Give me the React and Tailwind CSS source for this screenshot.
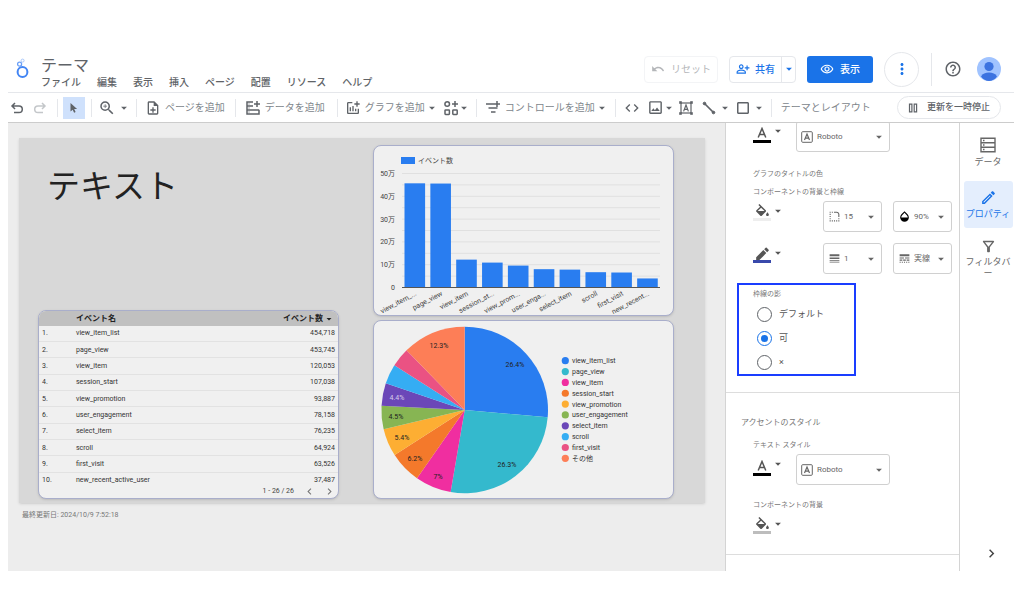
import { useState } from 'react'
import {
  MdUndo, MdArrowDropDown, MdZoomIn, MdOutlineNoteAdd, MdAddchart, MdCode, MdOutlineImage,
  MdCropSquare, MdFormatColorFill, MdBorderColor, MdOpacity, MdLineWeight, MdLineStyle,
  MdRoundedCorner, MdOutlineRemoveRedEye, MdOutlinePersonAddAlt, MdMoreVert, MdHelpOutline,
  MdOutlineFilterAlt, MdChevronRight, MdChevronLeft, MdOutlineEdit,
} from 'react-icons/md'

const MENU = ['ファイル', '編集', '表示', '挿入', 'ページ', '配置', 'リソース', 'ヘルプ']

const EVENTS = [
  { name: 'view_item_list', short: 'view_item_...', count: 454718 },
  { name: 'page_view', short: 'page_view', count: 453745 },
  { name: 'view_item', short: 'view_item', count: 120053 },
  { name: 'session_start', short: 'session_st...', count: 107038 },
  { name: 'view_promotion', short: 'view_prom...', count: 93887 },
  { name: 'user_engagement', short: 'user_enga...', count: 78158 },
  { name: 'select_item', short: 'select_item', count: 76235 },
  { name: 'scroll', short: 'scroll', count: 64924 },
  { name: 'first_visit', short: 'first_visit', count: 63526 },
  { name: 'new_recent_active_user', short: 'new_recent...', count: 37487 },
]

const SLICES = [
  { name: 'view_item_list', pct: 26.4, color: '#297df0', label: [142, 44] },
  { name: 'page_view', pct: 26.3, color: '#34b9cd', label: [134, 144] },
  { name: 'view_item', pct: 7, color: '#f02ea0', label: [65, 156] },
  { name: 'session_start', pct: 6.2, color: '#f4792b', label: [42, 138] },
  { name: 'view_promotion', pct: 5.4, color: '#fdae33', label: [29, 117] },
  { name: 'user_engagement', pct: 4.5, color: '#87b553', label: [23, 96] },
  { name: 'select_item', pct: 4.4, color: '#6b47b8', label: [24, 77], light: true },
  { name: 'scroll', pct: 3.8, color: '#35adf3' },
  { name: 'first_visit', pct: 3.7, color: '#ea5283' },
  { name: 'その他', pct: 12.3, color: '#fd7e57', label: [66, 25] },
]

function Caret({ className = '' }) {
  return <MdArrowDropDown className={`size-[14px] shrink-0 ${className}`} />
}

function Sep({ className = '' }) {
  return <span className={`h-[18px] w-px shrink-0 bg-gray-200 ${className}`} />
}

function Logo() {
  return (
    <svg viewBox="0 0 14 22" className="h-[22px] w-[14px]" fill="none" stroke="#4285f4">
      <circle cx="7.5" cy="15" r="4.9" strokeWidth="2" />
      <circle cx="4.6" cy="7.2" r="2" strokeWidth="1.3" stroke="#6a9ff6" />
      <circle cx="7.6" cy="3.6" r="1.5" strokeWidth="1" stroke="#a9c8fb" />
    </svg>
  )
}

function UndoIcon({ flip }) {
  return (
    <svg viewBox="0 0 14 14" className={`size-[14px] ${flip ? '-scale-x-100' : ''}`} fill="none" stroke="currentColor" strokeWidth="1.5">
      <path d="M5 2 2 5l3 3M2 5h7a3.2 3.2 0 0 1 0 6.6H4" />
    </svg>
  )
}

function PointerIcon() {
  return (
    <svg viewBox="0 0 10 12" className="h-[12px] w-[10px]" fill="currentColor">
      <path d="M1.5 1v8.6l2.2-1.9 1.4 3.1 1.5-.7-1.4-3 2.9-.2z" />
    </svg>
  )
}

function DataAddIcon() {
  return (
    <svg viewBox="0 0 16 16" className="size-[16px]" fill="none" stroke="currentColor" strokeWidth="1.5">
      <path d="M8 2H2v12h12V9.800M2 6h6M2 10h12M12 1v6M9 4h6" />
      <path d="M3.5 4h1M3.5 8h1M3.5 12h1" strokeWidth="1" />
    </svg>
  )
}

function WidgetAddIcon() {
  return (
    <svg viewBox="0 0 16 16" className="size-[16px]" fill="none" stroke="currentColor" strokeWidth="1.5">
      <circle cx="4.2" cy="4" r="2.3" />
      <path d="M12 1v6M9 4h6" />
      <rect x="2" y="10" width="4.4" height="4.4" rx=".6" />
      <rect x="9.8" y="10" width="4.4" height="4.4" rx=".6" />
    </svg>
  )
}

function ControlAddIcon() {
  return (
    <svg viewBox="0 0 16 16" className="size-[16px]" fill="none" stroke="currentColor" strokeWidth="1.5">
      <path d="M1 4h9M3.5 8h9M6 12h4.5M12 1v6M9 4h6" />
    </svg>
  )
}

function TextBoxIcon() {
  return (
    <svg viewBox="0 0 14 14" className="size-[14px]" fill="none" stroke="currentColor">
      <rect x="2" y="2" width="10" height="10" strokeWidth="1.2" />
      <path d="M4.6 10.4 7 4l2.4 6.4M5.4 8.4h3.2" strokeWidth="1.2" />
      <path d="M.5.5h2v2h-2zM11.5.5h2v2h-2zM.5 11.5h2v2h-2zM11.5 11.5h2v2h-2z" fill="currentColor" strokeWidth=".6" />
    </svg>
  )
}

function LineIcon() {
  return (
    <svg viewBox="0 0 14 14" className="size-[14px]" fill="currentColor" stroke="currentColor">
      <path d="M2.5 2.5 11.5 11.5" strokeWidth="1.7" />
      <circle cx="2.5" cy="2.5" r="1.3" />
      <circle cx="11.5" cy="11.5" r="1.3" />
    </svg>
  )
}

function PauseIcon() {
  return (
    <svg viewBox="0 0 10 10" className="size-[10px]" fill="none" stroke="currentColor" strokeWidth="1.2">
      <path d="M1.5 1.2h2.4v7.6H1.5zM6.2 1.2h2.4v7.6H6.2z" />
    </svg>
  )
}

function DataIcon() {
  return (
    <svg viewBox="0 0 16 16" className="size-[16px]" fill="none" stroke="currentColor" strokeWidth="1.4">
      <path d="M1 1.2h14v13.6H1zM1 5.7h14M1 10.3h14" />
      <path d="M3 3.5h1.5M3 8h1.5M3 12.5h1.5" />
    </svg>
  )
}

function FontIcon() {
  return (
    <svg viewBox="0 0 12 12" className="size-[12px]" fill="none" stroke="currentColor">
      <rect x=".7" y=".7" width="10.6" height="10.6" rx="1" />
      <path d="M3.5 9 6 3l2.5 6M4.3 7.2h3.4" strokeWidth="1.2" />
    </svg>
  )
}

function LetterIcon() {
  return (
    <svg viewBox="0 0 12 12" className="size-[12px]" fill="none" stroke="currentColor" strokeWidth="1.5">
      <path d="M2.2 10.5 6 1.5l3.8 9M3.5 7.6h5" />
    </svg>
  )
}

function Avatar() {
  return (
    <svg viewBox="0 0 24 24" className="size-[24px]">
      <circle cx="12" cy="12" r="12" fill="#a0c3ff" />
      <circle cx="12" cy="9.5" r="4.6" fill="#3c73e0" />
      <path d="M4 19.5c1.5-3 4.5-4 8-4s6.5 1 8 4c-2 2.8-5 4.5-8 4.5s-6-1.7-8-4.5z" fill="#3c73e0" />
    </svg>
  )
}

function Header() {
  return (
    <header className="flex h-[44px] items-center">
      <div className="ml-[7px] self-start pt-[9px]"><Logo /></div>
      <div className="ml-[12px] self-start pt-[9px]">
        <h1 className="text-[16px] leading-[18px] text-[#5f6368]">テーマ</h1>
        <nav className="flex gap-[16px]">
          {MENU.map(item => (
            <button key={item} className="text-[10px] leading-[16px] font-medium text-[#606367]">{item}</button>
          ))}
        </nav>
      </div>
      <div className="ml-auto flex items-center pb-[2px]">
        <button className="flex h-[27px] w-[74px] items-center justify-center gap-[6px] rounded border border-gray-100 text-[10px] text-[#b4b6b9]">
          <MdUndo className="size-[14px]" />
          リセット
        </button>
        <div className="ml-[11px] flex h-[27px] rounded border border-gray-200 text-[#1a73e8]">
          <button className="flex w-[51px] items-center justify-center gap-[5px] text-[10px] font-medium">
            <MdOutlinePersonAddAlt className="size-[14px]" />
            共有
          </button>
          <button aria-label="共有オプション" className="flex w-[14px] items-center justify-center border-l border-gray-200"><Caret /></button>
        </div>
        <button className="ml-[11px] flex h-[27px] w-[66px] items-center justify-center gap-[6px] rounded-[3px] bg-[#1a73e8] text-[10px] font-medium text-white">
          <MdOutlineRemoveRedEye className="size-[14px]" />
          表示
        </button>
        <button aria-label="その他" className="ml-[11px] flex size-[35px] items-center justify-center rounded-full border border-gray-200 text-[#1a73e8]">
          <MdMoreVert className="size-[18px]" />
        </button>
        <span className="ml-[12px] h-[33px] w-px bg-gray-200" />
        <button aria-label="ヘルプ" className="ml-[12px] text-[#5f6368]"><MdHelpOutline className="size-[18px]" /></button>
        <button aria-label="アカウント" className="mr-[13px] ml-[15px]"><Avatar /></button>
      </div>
    </header>
  )
}

function Toolbar() {
  return (
    <div className="flex h-[30px] items-center border-t border-gray-200 text-[10px] text-[#5f6368]">
      <button aria-label="元に戻す" className="flex w-[18px] justify-center"><UndoIcon /></button>
      <button aria-label="やり直し" className="flex w-[28px] justify-center text-[#c4c7ca]"><UndoIcon flip /></button>
      <Sep className="mr-[5px] ml-[3px]" />
      <button aria-label="選択" className="flex size-[22px] items-center justify-center bg-[#cfe1fc]"><PointerIcon /></button>
      <Sep className="mx-[6px]" />
      <button aria-label="ズーム" className="flex items-center gap-[2px]">
        <MdZoomIn className="size-[18px]" />
        <Caret className="-ml-px" />
      </button>
      <Sep className="mx-[5px]" />
      <button className="ml-[3px] flex items-center gap-[4px]">
        <MdOutlineNoteAdd className="size-[16px]" />
        <span className="text-[#80868b]">ページを追加</span>
      </button>
      <Sep className="mr-[9px] ml-[10px]" />
      <button className="flex items-center gap-[4px]">
        <DataAddIcon />
        <span className="text-[#80868b]">データを追加</span>
      </button>
      <Sep className="mr-[7px] ml-[12px]" />
      <button className="flex items-center gap-[4px]">
        <MdAddchart className="size-[16px]" />
        <span className="text-[#80868b]">グラフを追加</span>
        <Caret className="-ml-[4px]" />
      </button>
      <button aria-label="コミュニティ ビジュアリゼーション" className="ml-[4px] flex items-center">
        <WidgetAddIcon />
        <Caret className="-ml-[2px]" />
      </button>
      <Sep className="mr-[8px] ml-[5px]" />
      <button className="flex items-center gap-[4px]">
        <ControlAddIcon />
        <span className="text-[#80868b]">コントロールを追加</span>
        <Caret className="-ml-[4px]" />
      </button>
      <Sep className="mr-[8px] ml-[6px]" />
      <button aria-label="URL の埋め込み"><MdCode className="size-[16px]" /></button>
      <button aria-label="画像" className="ml-[7px] flex items-center">
        <MdOutlineImage className="size-[17px]" />
        <Caret className="-ml-[2px]" />
      </button>
      <button aria-label="テキスト" className="ml-[3px]"><TextBoxIcon /></button>
      <button aria-label="線" className="ml-[9px] flex items-center gap-[2px]">
        <LineIcon />
        <Caret />
      </button>
      <button aria-label="図形" className="ml-[2px] flex items-center">
        <MdCropSquare className="size-[18px]" />
        <Caret />
      </button>
      <Sep className="mr-[9px] ml-[5px]" />
      <button className="text-[#80868b]">テーマとレイアウト</button>
      <button className="mr-[13px] ml-auto flex h-[23px] w-[104px] items-center justify-center gap-[9px] rounded-full border border-gray-200 text-[9px] font-medium">
        <PauseIcon />
        更新を一時停止
      </button>
    </div>
  )
}

function BarChart() {
  const base = 142
  const unit = 114 / 500000
  return (
    <svg viewBox="1 1 299 169" className="block w-full text-[7px]" fill="#444">
      <rect x="28" y="12" width="14" height="7" fill="#297df0" />
      <text x="45" y="18">イベント数</text>
      {Array.from({ length: 10 }, (_, i) => (
        <rect key={i} x="29" y={28 + i * 11.4} width="258" height="1" fill="#e0e0e0" />
      ))}
      {[0, 10, 20, 30, 40, 50].map(n => (
        <text key={n} x="22" y={base + 3 - n * 2.28} textAnchor="end">{n ? `${n}万` : '0'}</text>
      ))}
      {EVENTS.map((e, i) => (
        <rect key={e.name} x={31.5 + i * 25.85} y={base - e.count * unit} width="20.6" height={e.count * unit} fill="#297df0" />
      ))}
      <rect x="29" y={base} width="258" height="1" fill="#555" />
      {EVENTS.map((e, i) => {
        const x = 44 + i * 25.85
        return (
          <text key={e.name} x={x} y="150" textAnchor="end" transform={`rotate(-28 ${x} 150)`}>{e.short}</text>
        )
      })}
    </svg>
  )
}

function PieChart() {
  const cx = 91.7
  const cy = 90
  const r = 83.3
  const point = pct => {
    const a = (pct / 100) * Math.PI * 2
    return `${cx + r * Math.sin(a)} ${cy - r * Math.cos(a)}`
  }
  let start = 0
  const paths = SLICES.map(s => {
    const from = start
    start += s.pct
    return { ...s, d: `M${cx} ${cy}L${point(from)}A${r} ${r} 0 0 1 ${point(start)}Z` }
  })
  return (
    <svg viewBox="1 1 299 177" className="block w-full text-[7px]" fill="#333">
      {paths.map(s => <path key={s.name} d={s.d} fill={s.color} />)}
      {SLICES.filter(s => s.label).map(s => (
        <text key={s.name} x={s.label[0]} y={s.label[1] + 3} textAnchor="middle" fill={s.light ? '#d6cdea' : '#222'}>{s.pct}%</text>
      ))}
      {SLICES.map((s, i) => (
        <g key={s.name}>
          <circle cx="192.3" cy={40.7 + i * 10.85} r="3.6" fill={s.color} />
          <text x="199" y={43.2 + i * 10.85}>{s.name}</text>
        </g>
      ))}
    </svg>
  )
}

function EventTable() {
  return (
    <div className="overflow-hidden rounded-lg border border-[#a9aecb] bg-[#f0f0f0] shadow">
      <div className="h-[173px] overflow-hidden">
        <table className="h-[178px] w-full text-[7px] leading-[8px] text-[#333]">
          <thead>
            <tr className="h-[15px] bg-[#c0c0c0] text-[8px] text-[#222]">
              <th className="w-[37px]" aria-label="番号" />
              <th className="text-left font-bold">イベント名</th>
              <th className="pr-[3px] text-right font-bold">
                <button className="inline-flex items-center">イベント数<MdArrowDropDown className="size-[12px]" /></button>
              </th>
            </tr>
          </thead>
          <tbody>
            {EVENTS.map((e, i) => (
              <tr key={e.name} className="border-b border-[#e2e2e2]">
                <td className="pl-[3px]">{i + 1}.</td>
                <td>{e.name}</td>
                <td className="pr-[3px] text-right">{e.count.toLocaleString('en-US')}</td>
              </tr>
            ))}
          </tbody>
        </table>
      </div>
      <div className="flex h-[14px] items-center justify-end pr-[2px] text-[7px] text-[#444]">
        1 - 26 / 26
        <button aria-label="前へ" className="ml-[9px] text-[#777]"><MdChevronLeft className="size-[13px]" /></button>
        <button aria-label="次へ" className="ml-[7px] text-[#777]"><MdChevronRight className="size-[13px]" /></button>
      </div>
    </div>
  )
}

function Canvas() {
  return (
    <main className="min-w-0 flex-1 bg-[#ededed] pt-[15px] pr-[20px] pl-[11px]">
      <div className="grid grid-cols-2 gap-[34px] bg-[#d8d8d8] pt-[7px] pr-[31px] pb-[4px] pl-[19px] shadow">
        <div className="flex flex-col justify-between">
          <p className="mt-[25px] ml-[9px] text-[33px] leading-none text-[#222]">テキスト</p>
          <EventTable />
        </div>
        <div className="flex flex-col gap-[4px]">
          <div className="rounded-lg border border-[#a9aecb] bg-[#f0f0f0] shadow"><BarChart /></div>
          <div className="rounded-lg border border-[#a9aecb] bg-[#f0f0f0] shadow"><PieChart /></div>
        </div>
      </div>
      <p className="mt-[7px] ml-[3px] text-[7px] leading-[10px] text-[#777]">最終更新日: 2024/10/9 7:52:18</p>
    </main>
  )
}

function Picker({ label, icon, value, className }) {
  return (
    <label className={`relative flex h-[31px] shrink-0 items-center text-[#666] ${className}`}>
      <span className="pointer-events-none absolute left-[5px]">{icon}</span>
      <select aria-label={label} className="size-full appearance-none rounded-[3px] border border-[#d0d0d0] pl-[20px] text-[8px]">
        <option>{value}</option>
      </select>
      <Caret className="pointer-events-none absolute right-[4px]" />
    </label>
  )
}

function ColorButton({ label, icon, swatch }) {
  return (
    <button aria-label={label} className="flex items-start pt-[3px] text-[#555]">
      <span className="flex w-[18px] flex-col items-center">
        {icon}
        <span className={`h-[3px] w-[18px] ${swatch}`} />
      </span>
      <Caret />
    </button>
  )
}

// Only the bucket and the drop, the colour bar below is drawn separately
function BucketIcon() {
  return (
    <span className="flex h-[14px] overflow-hidden"><MdFormatColorFill className="size-[17px] shrink-0" /></span>
  )
}

function PropertiesPanel() {
  const [shadow, setShadow] = useState('可')
  return (
    <aside className="w-[235px] shrink-0 overflow-hidden border-x border-[#d4d4d4] bg-white text-[7px] leading-[10px] text-[#777]">
      <div className="-mt-[2px] flex pl-[27px]">
        <ColorButton label="文字の色" icon={<span className="pt-[3px] pb-[1px]"><LetterIcon /></span>} swatch="bg-black" />
        <Picker label="フォント" icon={<FontIcon />} value="Roboto" className="ml-[11px] w-[94px]" />
      </div>
      <p className="mt-[17px] pl-[27px]">グラフのタイトルの色</p>
      <p className="mt-[8px] pl-[27px]">コンポーネントの背景と枠線</p>
      <div className="mt-[4px] flex justify-between pr-[7px] pl-[27px]">
        <ColorButton label="背景色" icon={<BucketIcon />} swatch="bg-[#eee]" />
        <div className="flex gap-[11px]">
          <Picker label="角の半径" icon={<MdRoundedCorner className="size-[13px] -scale-y-100 rotate-180 -scale-x-100" />} value="15" className="w-[59px]" />
          <Picker label="不透明度" icon={<MdOpacity className="size-[13px] text-black" />} value="90%" className="w-[59px]" />
        </div>
      </div>
      <div className="mt-[11px] flex justify-between pr-[7px] pl-[27px]">
        <ColorButton label="枠線の色" icon={<span className="flex h-[14px] overflow-hidden"><MdBorderColor className="size-[19px]" /></span>} swatch="bg-[#3949ab]" />
        <div className="flex gap-[11px]">
          <Picker label="枠線の太さ" icon={<MdLineWeight className="size-[13px]" />} value="1" className="w-[59px]" />
          <Picker label="枠線のスタイル" icon={<MdLineStyle className="size-[13px]" />} value="実線" className="w-[59px]" />
        </div>
      </div>
      <fieldset className="mt-[9px] ml-[11px] w-[119px] border-2 border-[#1a3dff] pl-[14px]">
        <legend className="float-left w-full pt-[4px]">枠線の影</legend>
        <div className="clear-both flex flex-col pt-[3px]">
          {['デフォルト', '可', '×'].map(option => (
            <label key={option} className="flex h-[24px] items-center gap-[7px] pl-[4px] text-[9px] text-[#555]">
              <input
                type="radio"
                name="shadow"
                checked={shadow === option}
                onChange={() => setShadow(option)}
                className="size-[15px] appearance-none rounded-full border border-[#5f6368] bg-clip-content p-[3px] checked:border-[#1a73e8] checked:bg-[#1a73e8]"
              />
              {option}
            </label>
          ))}
        </div>
      </fieldset>
      <section className="mt-[16px] border-t border-[#ddd] pt-[25px]">
        <h2 className="pl-[15px] text-[8px]">アクセントのスタイル</h2>
        <p className="mt-[12px] pl-[27px]">テキスト スタイル</p>
        <div className="mt-[4px] flex pl-[27px]">
          <ColorButton label="文字の色" icon={<span className="pt-[3px] pb-[1px]"><LetterIcon /></span>} swatch="bg-black" />
          <Picker label="フォント" icon={<FontIcon />} value="Roboto" className="ml-[11px] w-[94px]" />
        </div>
        <p className="mt-[15px] pl-[27px]">コンポーネントの背景</p>
        <div className="mt-[4px] pl-[27px]">
          <ColorButton label="背景色" icon={<BucketIcon />} swatch="bg-[#bdbdbd]" />
        </div>
      </section>
      <div className="mt-[20px] h-[17px] border-t border-[#ddd]" />
    </aside>
  )
}

function Rail() {
  return (
    <div className="flex w-[54px] shrink-0 flex-col items-center pl-[2px] text-[9px] leading-[11px] text-[#666]">
      <button className="mt-[14px] flex flex-col items-center gap-[4px]">
        <DataIcon />
        データ
      </button>
      <button className="mt-[13px] flex h-[47px] w-[49px] flex-col items-center justify-center gap-[3px] rounded-[3px] bg-[#e4eefd] text-[#1a73e8]">
        <MdOutlineEdit className="size-[17px]" />
        プロパティ
      </button>
      <button className="mt-[10px] flex w-[47px] flex-col items-center gap-[2px] break-all">
        <MdOutlineFilterAlt className="size-[17px]" />
        <span className="text-center">フィルタバ<br />ー</span>
      </button>
      <button aria-label="パネルを閉じる" className="mt-auto mb-[9px] ml-[6px] text-[#444]"><MdChevronRight className="size-[17px]" /></button>
    </div>
  )
}

export default function App() {
  return (
    <div className="bg-white pt-[48px] pr-[10px] pb-[42px] pl-[8px] font-['Roboto','Noto_Sans_CJK_JP',sans-serif]">
      <Header />
      <Toolbar />
      <div className="flex border-t border-[#ccc]">
        <Canvas />
        <PropertiesPanel />
        <Rail />
      </div>
    </div>
  )
}
